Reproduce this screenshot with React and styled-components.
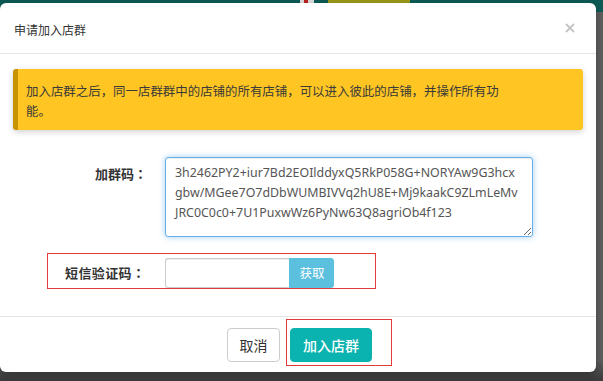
import React from "react";
import styled, { createGlobalStyle } from "styled-components";

const Global = createGlobalStyle`
  html, body { margin: 0; padding: 0; }
  body { font-family: "Noto Sans", "Noto Sans CJK SC", sans-serif; background: #575757; }
  * { box-sizing: border-box; }
`;

const Page = styled.div`
  width: 603px;
  height: 381px;
  overflow: hidden;
  background:
    linear-gradient(to bottom, #0c5b56 0px, #0c5b56 12px, transparent 12px),
    linear-gradient(to bottom, #5e5e5e 0px, #5e5e5e 360px, #3a3a3a 381px);
  display: flex;
  flex-direction: column;
  align-items: flex-start;
`;

const TopStrip = styled.div`
  height: 3px;
  width: 100%;
  display: flex;
  align-items: flex-start;
  padding-left: 300px;
  gap: 4px;
`;

const StripThumb = styled.span`
  width: 14px;
  height: 3px;
  background: linear-gradient(to right, #ddd 0 30%, #b22 30% 55%, #ddd 55%);
`;

const StripText = styled.span`
  width: 82px;
  height: 3px;
  margin-left: 10px;
  background: #9a9a1a;
`;

const Modal = styled.div`
  width: 596px;
  height: 369px;
  background: #fff;
  border-radius: 6px;
  display: flex;
  flex-direction: column;
  box-shadow: 0 3px 9px rgba(0, 0, 0, 0.3);
`;

const Header = styled.div`
  height: 51px;
  flex-shrink: 0;
  display: flex;
  align-items: center;
  justify-content: space-between;
  padding: 0 20px 0 14px;
  border-bottom: 1px solid #e5e5e5;
`;

const Title = styled.h4`
  margin: 0;
  font-family: "Noto Sans CJK SC", sans-serif;
  font-size: 12px;
  font-weight: 400;
  color: #333;
  position: relative;
  top: 1px;
`;

const Close = styled.button`
  border: 0;
  background: none;
  padding: 0;
  width: 12px;
  height: 12px;
  display: flex;
  align-items: center;
  justify-content: center;
  cursor: pointer;
`;

const Body = styled.div`
  flex: 1;
  display: flex;
  flex-direction: column;
  padding: 15px 13px 0 13px;
`;

const Alert = styled.div`
  width: 570px;
  background: #fec523;
  border-left: 5px solid #c79400;
  border-radius: 3px;
  padding: 12px 70px 9px 8px;
  font-family: "Noto Sans CJK SC", sans-serif;
  font-size: 12.45px;
  line-height: 20px;
  color: #3a3a3a;
  box-shadow: 0 2px 6px rgba(0, 0, 0, 0.18);
`;

const Form = styled.div`
  display: flex;
  flex-direction: column;
  margin-top: 27px;
`;

const Row = styled.div`
  display: flex;
  align-items: ${(p) => (p.$top ? "flex-start" : "center")};
`;

const Label = styled.label`
  width: 134px;
  flex-shrink: 0;
  text-align: right;
  font-family: "Noto Sans CJK TC", sans-serif;
  font-size: 13px;
  font-weight: 700;
  color: #333;
  padding-top: ${(p) => p.$pt || 0}px;
`;

const TextArea = styled.textarea`
  width: 368px;
  height: 80px;
  margin-left: 18px;
  border: 1px solid #66afe9;
  border-radius: 3px;
  box-shadow: inset 0 1px 1px rgba(0, 0, 0, 0.075), 0 0 6px rgba(102, 175, 233, 0.6);
  padding: 5px 9px;
  font-family: "Noto Sans", sans-serif;
  font-size: 12.4px;
  line-height: 20px;
  color: #555;
  resize: vertical;
  outline: none;
  overflow: hidden;
  white-space: pre;
`;

const SmsBox = styled.div`
  margin-top: 16px;
  margin-left: 34px;
  width: 329px;
  height: 36px;
  border: 1px solid #e8393a;
  display: flex;
  align-items: center;
  padding: 3px 0 0 17px;
`;

const SmsLabel = styled(Label)`
  width: auto;
  letter-spacing: 0.4px;
`;

const InputGroup = styled.div`
  display: flex;
  margin-left: 20px;
  height: 30px;
`;

const Input = styled.input`
  width: 124px;
  height: 30px;
  border: 1px solid #ccc;
  border-right: 0;
  border-radius: 3px 0 0 3px;
  box-shadow: inset 0 1px 1px rgba(0, 0, 0, 0.075);
  outline: none;
`;

const AddonButton = styled.button`
  width: 45px;
  height: 30px;
  border: 1px solid #5bc0de;
  background: #5bc0de;
  color: #fff;
  border-radius: 0 3px 3px 0;
  font-family: "Noto Sans CJK SC", sans-serif;
  font-size: 12.5px;
  padding: 0;
`;

const Footer = styled.div`
  height: 56px;
  flex-shrink: 0;
  border-top: 1px solid #e5e5e5;
  display: flex;
  justify-content: center;
  align-items: flex-start;
  padding-top: 1px;
  padding-left: 23px;
`;

const Button = styled.button`
  height: 34px;
  padding: 0;
  border-radius: 4px;
  border: 1px solid ${(p) => (p.$primary ? "#0bb3b0" : "#ccc")};
  background: ${(p) => (p.$primary ? "#0bb3b0" : "#fff")};
  color: ${(p) => (p.$primary ? "#fff" : "#333")};
  font-family: "Noto Sans CJK SC", sans-serif;
  font-size: 14px;
  font-weight: ${(p) => (p.$primary ? 500 : 400)};
  width: ${(p) => p.$w}px;
  margin-top: 10px;
`;

const Outline = styled.div`
  margin-left: 6px;
  width: 106px;
  height: 47px;
  border: 1px solid #e33b3b;
  display: flex;
  align-items: flex-start;
  padding: 8px 0 0 3px;
  margin-top: 1px;

  & > ${Button} {
    margin-top: 0;
  }
`;

const CODE =
  "3h2462PY2+iur7Bd2EOIlddyxQ5RkP058G+NORYAw9G3hcx\ngbw/MGee7O7dDbWUMBIVVq2hU8E+Mj9kaakC9ZLmLeMv\nJRC0C0c0+7U1PuxwWz6PyNw63Q8agriOb4f123";

export default function App() {
  return (
    <>
      <Global />
      <Page>
        <TopStrip>
          <StripThumb />
          <StripText />
        </TopStrip>
        <Modal>
          <Header>
            <Title>申请加入店群</Title>
            <Close aria-label="关闭">
              <svg width="10" height="10" viewBox="0 0 10 10">
                <path d="M1 1L9 9M9 1L1 9" stroke="#c4c4c4" strokeWidth="1.8" />
              </svg>
            </Close>
          </Header>
          <Body>
            <Alert>
              加入店群之后，同一店群群中的店铺的所有店铺，可以进入彼此的店铺，并操作所有功能。
            </Alert>
            <Form>
              <Row $top>
                <Label $pt={7}>加群码：</Label>
                <TextArea defaultValue={CODE} spellCheck={false} />
              </Row>
              <SmsBox>
                <SmsLabel>短信验证码：</SmsLabel>
                <InputGroup>
                  <Input />
                  <AddonButton>获取</AddonButton>
                </InputGroup>
              </SmsBox>
            </Form>
          </Body>
          <Footer>
            <Button $w={53}>取消</Button>
            <Outline>
              <Button $primary $w={82}>加入店群</Button>
            </Outline>
          </Footer>
        </Modal>
      </Page>
    </>
  );
}
